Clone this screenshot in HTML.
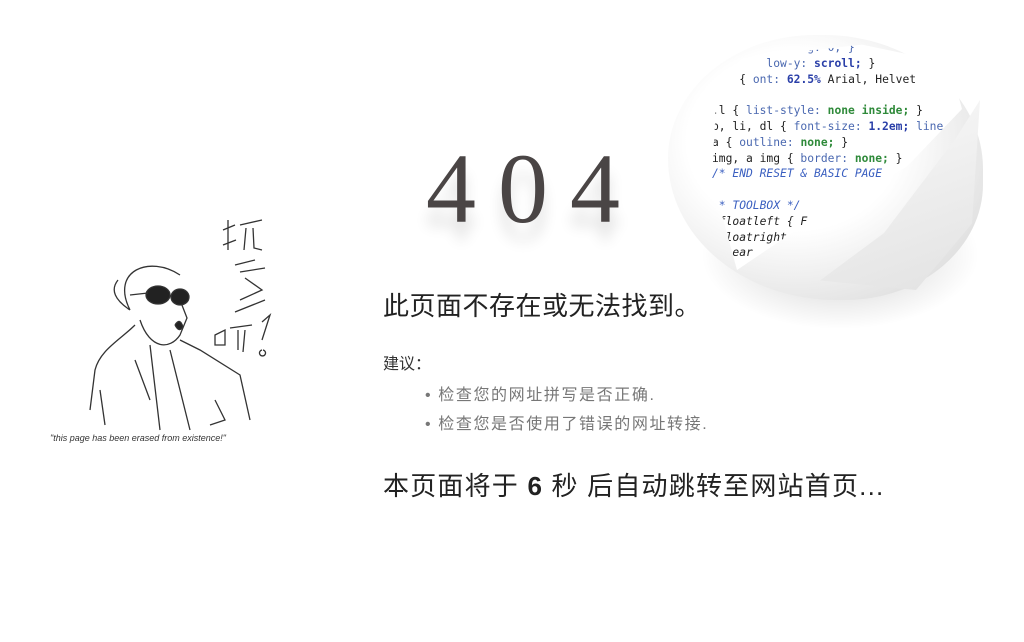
<!DOCTYPE html>
<html><head><meta charset="utf-8">
<style>
body{margin:0;width:1024px;height:642px;background:#fff;position:relative;overflow:hidden;font-family:"Liberation Sans","Noto Sans CJK SC",sans-serif;}
.abs{position:absolute;}
.n404{left:426px;top:134px;font-family:"Liberation Serif",serif;font-size:100px;color:#4a4545;letter-spacing:22px;line-height:110px;text-shadow:0 18px 14px rgba(0,0,0,0.12);}
.h1{left:383px;top:289px;font-size:26px;letter-spacing:0.5px;color:#222;line-height:34px;white-space:nowrap;}
.sug{left:383px;top:350px;font-size:16px;color:#333;}
.li{left:425px;font-size:16px;letter-spacing:1.6px;color:#777;white-space:nowrap;}
.bot{left:383px;top:466px;font-size:26px;letter-spacing:1.2px;color:#222;white-space:nowrap;}
.code{font-family:"DejaVu Sans Mono",monospace;font-size:11.3px;line-height:15.8px;color:#222;white-space:pre;}
.k{color:#4a68b0}.g{color:#2f8a3a;font-weight:bold}.b{color:#2a3fa8;font-weight:bold}.c{color:#3a5fc0;font-style:italic}
</style></head><body>
<div class="abs" style="left:700px;top:180px;width:280px;height:150px;border-radius:50%;background:radial-gradient(ellipse at center,rgba(0,0,0,0.2),rgba(0,0,0,0) 70%);"></div>
<div class="abs" style="left:668px;top:35px;width:315px;height:265px;border-radius:48% 52% 45% 55%;background:radial-gradient(ellipse at 40% 40%,#fff 40%,#e4e4e4 75%,#cfcfcf);"></div>
<div class="abs code" style="left:712px;top:40px;width:250px;height:230px;background:#fff;clip-path:polygon(12% 8%,60% 2%,95% 10%,100% 30%,78% 55%,40% 78%,10% 100%,0% 60%,2% 20%);">         <span class="k">adding: 0; }</span>
        <span class="k">low-y:</span> <span class="b">scroll;</span> }
    { <span class="k">ont:</span> <span class="b">62.5%</span> Arial, Helvet

.l { <span class="k">list-style:</span> <span class="g">none inside;</span> }
p, li, dl { <span class="k">font-size:</span> <span class="b">1.2em;</span> <span class="k">line-</span>
a { <span class="k">outline:</span> <span class="g">none;</span> }
img, a img { <span class="k">border:</span> <span class="g">none;</span> }
<span class="c">/* END RESET &amp; BASIC PAGE</span>

<span class="c">/* TOOLBOX */</span>
<span style="font-style:italic">.floatleft { F
.floatright
.clear</span></div>
<div class="abs" style="left:820px;top:100px;width:160px;height:190px;background:linear-gradient(160deg,#fafafa,#e2e2e2);clip-path:polygon(100% 0%,95% 65%,60% 100%,0% 95%,40% 70%,85% 20%);"></div>

<div class="abs n404">404</div>

<svg class="abs" style="left:40px;top:200px" width="260" height="250" viewBox="0 0 260 250" fill="none" stroke="#333" stroke-width="1.3">
<path d="M183 30 L195 25 M188 20 L188 50 M183 45 L196 40 M200 25 L222 20 M206 28 L204 50 M213 28 L214 48 L222 50"/>
<path d="M195 65 L215 60 M200 72 L225 68 M205 78 L222 90 L200 100 M195 112 L225 100"/>
<path d="M175 135 L185 130 L185 145 L175 145 Z M190 128 L212 125 M198 130 L198 150 M205 130 L203 152 M222 122 L230 115 L222 140 M222 150 a3 3 0 1 0 1 0"/>
<path d="M90 110 C 70 70 110 55 140 75 M90 110 C75 100 70 90 78 80 M100 120 C110 150 130 150 140 135 L147 118 L140 100 M95 125 C 80 140 60 150 55 170 L50 210 M140 140 L160 150 L200 175 L210 220 M110 145 L120 230 M130 150 L150 230 M95 160 L110 200 M60 190 L65 225 M175 200 L185 220 L170 225"/>
<ellipse cx="118" cy="95" rx="12" ry="9" fill="#222"/><ellipse cx="140" cy="97" rx="9" ry="8" fill="#222"/>
<path d="M90 95 L108 93" /><path d="M135 125 q5 -8 8 2 q-4 6 -8 -2" fill="#222"/>
<text x="10" y="241" font-family="Liberation Sans" font-style="italic" font-size="9" fill="#333" stroke="none">"this page has been erased from existence!"</text>
</svg>

<div class="abs h1">此页面不存在或无法找到。</div>
<div class="abs sug">建议：</div>
<div class="abs li" style="top:381px">• 检查您的网址拼写是否正确.</div>
<div class="abs li" style="top:410px">• 检查您是否使用了错误的网址转接.</div>
<div class="abs bot">本页面将于 <b>6</b> 秒 后自动跳转至网站首页...</div>
</body></html>
